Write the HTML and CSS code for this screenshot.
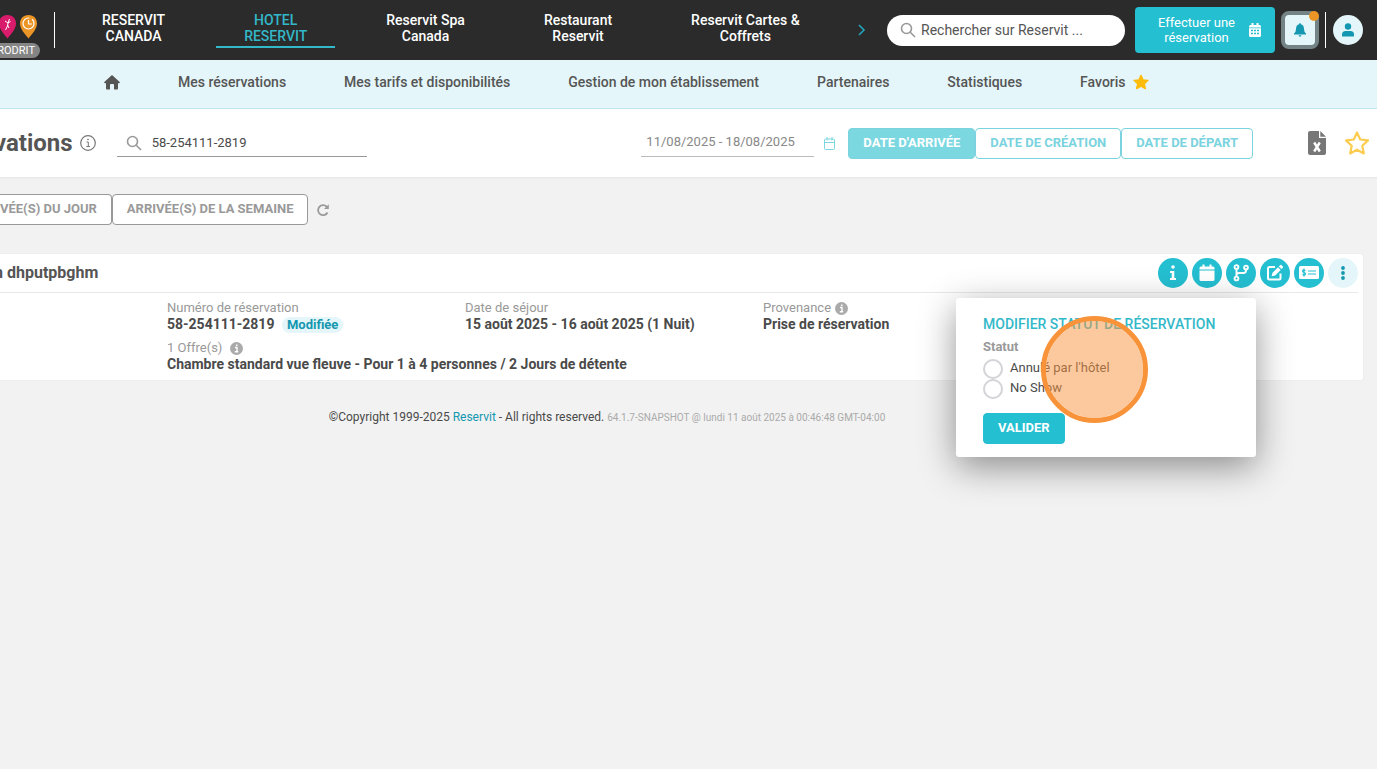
FILE: index.html
```html
<!DOCTYPE html>
<html lang="fr">
<head>
    <meta charset="UTF-8">
    <meta name="viewport" content="width=device-width, initial-scale=1.0">
    <title>Réservations</title>
    <link rel="stylesheet" href="styles.css">
</head>
<body>
    <header class="topbar">
        <div class="brand">
            <div class="pins">
                <svg width="19" height="24" viewBox="0 0 19 24">
                    <path d="M9.500 0C4 0 1 4 1 8.500 1 14 6 19 9.500 23.500 13 19 18 14 18 8.500 18 4 15 0 9.500 0z" fill="#d81b6a"/>
                    <path d="M11.500 4L10 8L9.500 11L7.500 15M9.500 10L11 13M7 6L10 8L12.500 6.500" stroke="#fff" stroke-width="1" fill="none"/>
                </svg>
                <svg width="19" height="24" viewBox="0 0 19 24">
                    <path d="M9.500 0C4 0 1 4 1 8.500 1 14 6 19 9.500 23.500 13 19 18 14 18 8.500 18 4 15 0 9.500 0z" fill="#ea9526"/>
                    <circle cx="9.500" cy="8.500" r="5.500" fill="none" stroke="#fff" stroke-width="1.200" stroke-dasharray="26 3"/>
                    <path d="M9.500 5V9H13" stroke="#fff" stroke-width="1.200" fill="none"/>
                </svg>
            </div>
            <span class="user-tag">RODRIT</span>
        </div>
        <span class="divider"></span>
        <nav class="tabs">
            <a href="#">RESERVIT<br>CANADA</a>
            <a href="#" class="active">HOTEL<br>RESERVIT</a>
            <a href="#">Reservit Spa<br>Canada</a>
            <a href="#">Restaurant<br>Reservit</a>
            <a href="#">Reservit Cartes &amp;<br>Coffrets</a>
        </nav>
        <button class="icon-btn next" aria-label="Suivant">
            <svg width="10" height="14" viewBox="0 0 10 14"><path d="M2 2L7 7L2 12" fill="none" stroke="#22a5bd" stroke-width="1.600"/></svg>
        </button>
        <label class="top-search">
            <svg width="16" height="16" viewBox="0 0 16 16" fill="none" stroke="#999" stroke-width="1.600"><circle cx="6.500" cy="6.500" r="5"/><path d="M10 10L15 15"/></svg>
            <input type="text" placeholder="Rechercher sur Reservit ..." aria-label="Rechercher">
        </label>
        <button class="book-btn">
            <span>Effectuer une<br>réservation</span>
            <svg width="12" height="14" viewBox="0 0 12 14">
                <path d="M1.500 2H2.500V0H4.500V2H7.500V0H9.500V2H10.500Q12 2 12 3.500V4.500H0V3.500Q0 2 1.500 2zM0 5.300H12V12.500Q12 14 10.500 14H1.500Q0 14 0 12.500z" fill="#fff"/>
                <path d="M2 7.500H4M5 7.500H7M8 7.500H10M2 10.500H4M5 10.500H7M8 10.500H10" stroke="#24bfd1" stroke-width="1.500"/>
            </svg>
        </button>
        <button class="bell-btn" aria-label="Notifications">
            <svg width="12" height="14" viewBox="0 0 12 14" fill="#1497b0"><path d="M5.200 1.200Q5.200 0 6 0T6.800 1.200Q10 2 10 6Q10 9 12 10.500V11.500H0V10.500Q2 9 2 6Q2 2 5.200 1.200zM4.500 12.300H7.500Q7.300 13.700 6 13.700T4.500 12.300z"/></svg>
            <span class="dot"></span>
        </button>
        <span class="divider"></span>
        <button class="avatar" aria-label="Mon compte">
            <svg width="12" height="14" viewBox="0 0 12 14" fill="#1497b0"><circle cx="6" cy="3.500" r="3.200"/><path d="M0 13.500V11.500Q0 8 3.500 8H8.500Q12 8 12 11.500V13.500z"/></svg>
        </button>
    </header>

    <nav class="menu">
        <a href="#" aria-label="Accueil">
            <svg width="16" height="15" viewBox="0 0 16 15" fill="#555"><path d="M8 0L16 7.300L15.200 8.300H14V13.500Q14 14.500 13 14.500H10V10Q10 9 9 9H7Q6 9 6 10V14.500H3Q2 14.500 2 13.500V8.300H0.800L0 7.300z"/></svg>
        </a>
        <a href="#">Mes réservations</a>
        <a href="#">Mes tarifs et disponibilités</a>
        <a href="#">Gestion de mon établissement</a>
        <a href="#">Partenaires</a>
        <a href="#">Statistiques</a>
        <a href="#">Favoris
            <svg width="16" height="16" viewBox="0 0 24 24" fill="#fdbb0b" stroke="#fdbb0b" stroke-width="2" stroke-linejoin="round"><path d="M12 2L15 8.800L22.500 9.500L17 14.500L18.600 22L12 18.200L5.400 22L7 14.500L1.500 9.500L9 8.800z"/></svg>
        </a>
    </nav>

    <section class="page-head">
        <h1>vations</h1>
        <svg class="title-info" width="16" height="16" viewBox="0 0 16 16" fill="none" stroke="#777"><circle cx="8" cy="8" r="7.300" stroke-width="1.200"/><path d="M6.500 7H8.300V11.500M6.300 11.500H10" stroke-width="1"/><circle cx="8" cy="4.500" r=".5"/></svg>
        <label class="res-search">
            <svg width="16" height="16" viewBox="0 0 16 16" fill="none" stroke="#999" stroke-width="1.600"><circle cx="6.500" cy="6.500" r="5"/><path d="M10 10L15 15"/></svg>
            <input type="text" value="58-254111-2819" aria-label="Numéro de réservation">
        </label>
        <div class="dates">
            <input type="text" value="11/08/2025 - 18/08/2025" aria-label="Période">
            <button class="icon-btn" aria-label="Calendrier">
                <svg width="11" height="13" viewBox="0 0 11 13" fill="none" stroke="#7bd6e0"><rect x=".5" y="2" width="10" height="10.500" rx="1"/><path d="M.5 5.500H10.500M3 0V3.500M8 0V3.500"/></svg>
            </button>
        </div>
        <div class="date-types">
            <button class="btn light filled">DATE D'ARRIVÉE</button>
            <button class="btn light">DATE DE CRÉATION</button>
            <button class="btn light">DATE DE DÉPART</button>
        </div>
        <div class="head-tools">
            <button class="icon-btn" aria-label="Exporter en Excel">
                <svg width="18" height="24" viewBox="0 0 18 24"><path d="M2 0H11V7H18V22Q18 24 16 24H2Q0 24 0 22V2Q0 0 2 0zM12.300 0L18 5.700H12.300z" fill="#777"/><path d="M6.200 11.500L11.800 20.500M11.800 11.500L6.200 20.500" stroke="#fff" stroke-width="2.400"/></svg>
            </button>
            <button class="icon-btn" aria-label="Ajouter aux favoris">
                <svg width="26" height="26" viewBox="0 0 26 26" fill="none" stroke="#fbcc4f" stroke-width="2.200" stroke-linejoin="round"><path d="M13 2.500L16.200 9.500L24 10.400L18.300 15.700L19.800 23.500L13 19.700L6.200 23.500L7.700 15.700L2 10.400L9.800 9.500z"/></svg>
            </button>
        </div>
    </section>

    <main>
        <div class="filters">
            <button class="btn grey cut">VÉE(S) DU JOUR</button>
            <button class="btn grey">ARRIVÉE(S) DE LA SEMAINE</button>
            <button class="icon-btn refresh" aria-label="Actualiser">
                <svg width="14" height="14" viewBox="0 0 14 14"><path d="M11.500 9.500A5 5 0 1 1 10.800 3.800" fill="none" stroke="#999" stroke-width="1.800"/><path d="M12.800 1.200V6H8z" fill="#999"/></svg>
            </button>
        </div>

        <article class="card">
            <div class="card-head">
                <h2>n dhputpbghm</h2>
                <div class="actions">
                    <button class="round" aria-label="Informations">
                        <svg width="18" height="18" viewBox="0 0 18 18" fill="#fff"><circle cx="9" cy="3" r="1.800"/><path d="M6 7H10.300V14H12V16H6V14H7.700V9H6z"/></svg>
                    </button>
                    <button class="round" aria-label="Dates">
                        <svg width="18" height="18" viewBox="0 0 18 18" fill="#fff"><path d="M3 2.500H4.500V.5H6.500V2.500H11.500V.5H13.500V2.500H15Q16.500 2.500 16.500 4V5.500H1.500V4Q1.500 2.500 3 2.500zM1.500 6.500H16.500V15.500Q16.500 17 15 17H3Q1.500 17 1.500 15.500z"/></svg>
                    </button>
                    <button class="round" aria-label="Dupliquer">
                        <svg width="18" height="18" viewBox="0 0 18 18" fill="none" stroke="#fff" stroke-width="1.900"><circle cx="4.500" cy="3" r="1.900"/><circle cx="4.500" cy="14.500" r="1.900"/><circle cx="14" cy="3.500" r="1.900"/><path d="M4.500 5V12.500M14 5.500V6.500Q14 9 11.500 9H7.500Q4.500 9 4.500 11"/></svg>
                    </button>
                    <button class="round" aria-label="Modifier">
                        <svg width="18" height="18" viewBox="0 0 18 18"><path d="M9 3H3.500Q2 3 2 4.500V14Q2 15.500 3.500 15.500H13Q14.500 15.500 14.500 14V9.500" fill="none" stroke="#fff" stroke-width="2"/><path d="M5.700 12.200L6.500 8.700L12 3.200L14.700 5.900L9.200 11.400zM12.800 2.400L14 1.200Q14.800.4 15.600 1.200L16.700 2.300Q17.500 3.100 16.700 3.900L15.500 5.100z" fill="#fff"/></svg>
                    </button>
                    <button class="round" aria-label="Paiement">
                        <svg width="20" height="16" viewBox="0 0 20 16"><rect x="0" y="1" width="20" height="13" rx="1.500" fill="#fff"/><path d="M6.500 5.500Q3.500 4.500 3.500 6T5 7.500T6.500 9Q6.500 10.500 3.500 9.600M5 3.500V11.500M9 6H17M9 9H17" fill="none" stroke="#24bfd1" stroke-width="1.200"/></svg>
                    </button>
                    <button class="round pale" aria-label="Plus d'actions">
                        <svg width="4" height="14" viewBox="0 0 4 14" fill="#1497b0"><circle cx="2" cy="2" r="1.900"/><circle cx="2" cy="7" r="1.900"/><circle cx="2" cy="12" r="1.900"/></svg>
                    </button>
                </div>
            </div>
            <div class="card-body">
                <div>
                    <p class="label">Numéro de réservation</p>
                    <p class="value">58-254111-2819 <span class="badge">Modifiée</span></p>
                </div>
                <div>
                    <p class="label">Date de séjour</p>
                    <p class="value">15 août 2025 - 16 août 2025 (1 Nuit)</p>
                </div>
                <div>
                    <p class="label">Provenance <svg width="13" height="13" viewBox="0 0 13 13"><circle cx="6.500" cy="6.500" r="6.500" fill="#aaa"/><path d="M5 5.500H7V9.500M4.800 9.800H8.300M6 3.300H7.500" stroke="#fff" stroke-width="1.400" fill="none"/></svg></p>
                    <p class="value">Prise de réservation</p>
                </div>
                <div class="offer">
                    <p class="label">1 Offre(s) <svg class="spaced" width="13" height="13" viewBox="0 0 13 13"><circle cx="6.500" cy="6.500" r="6.500" fill="#aaa"/><path d="M5 5.500H7V9.500M4.800 9.800H8.300M6 3.300H7.500" stroke="#fff" stroke-width="1.400" fill="none"/></svg></p>
                    <p class="value">Chambre standard vue fleuve - Pour 1 à 4 personnes / 2 Jours de détente</p>
                </div>
            </div>

            <form class="popup">
                <h3>MODIFIER STATUT DE RÉSERVATION</h3>
                <fieldset>
                    <legend>Statut</legend>
                    <label><input type="radio" name="statut"> Annulé par l'hôtel</label>
                    <label><input type="radio" name="statut"> No Show</label>
                </fieldset>
                <button type="button" class="btn submit">VALIDER</button>
                <span class="marker"></span>
            </form>
        </article>
    </main>

    <footer>
        ©Copyright 1999-2025 <a href="#">Reservit</a> - All rights reserved. <small>64.1.7-SNAPSHOT @ lundi 11 août 2025 à 00:46:48 GMT-04:00</small>
    </footer>
</body>
</html>
```
FILE: styles.css
```css
* {
    box-sizing: border-box;
}

body {
    margin: 0;
    background-color: #f2f2f2;
    color: #4a4a4a;
    font-family: Roboto, "Liberation Sans", sans-serif;
    font-size: 14px;
    line-height: 16px;
    min-height: 100vh;
    overflow-x: hidden;
}

h1, h2, h3, p, fieldset {
    margin: 0;
    padding: 0;
    border: none;
}

a {
    color: inherit;
    text-decoration: none;
}

button, input {
    font: inherit;
    color: inherit;
}

button {
    padding: 0;
    border: none;
    cursor: pointer;
}

input {
    min-width: 0;
    padding: 0;
    border: none;
    outline: none;
    background: none;
}

svg {
    display: block;
    flex-shrink: 0;
}

.icon-btn {
    background: none;
}

/* top bar */
.topbar {
    display: flex;
    align-items: center;
    height: 60px;
    padding-right: 14px;
    background-color: #2b2b2b;
    color: #fff;
}

.brand {
    display: flex;
    flex-direction: column;
    align-items: flex-end;
    width: 40px;
    height: 60px;
    padding-top: 15px;
    margin-right: 14px;
}

.pins {
    display: flex;
    gap: 2px;
    margin-right: 2px;
}

.user-tag {
    margin-top: 4px;
    padding-right: 5px;
    border-radius: 0 8px 8px 0;
    background-color: #858585;
    font-size: 11px;
    line-height: 15px;
}

.divider {
    width: 1px;
    height: 36px;
    background-color: #fff;
}

.tabs {
    display: flex;
    gap: 23px;
    margin-left: 19px;
    font-weight: 500;
    text-align: center;
}

.tabs a {
    padding: 0 28px 2px;
    border-bottom: 2px solid transparent;
    white-space: nowrap;
}

.tabs .active {
    color: #33b8c9;
    border-color: #33b8c9;
}

.next {
    margin: 0 20px 0 auto;
}

.top-search {
    display: flex;
    align-items: center;
    gap: 5px;
    width: 238px;
    height: 31px;
    padding: 0 13px;
    border-radius: 16px;
    background-color: #fff;
}

.top-search input {
    flex: 1;
    color: #444;
}

.top-search input::placeholder {
    color: #555;
    opacity: 1;
}

.book-btn {
    display: flex;
    align-items: center;
    justify-content: flex-end;
    gap: 14px;
    width: 140px;
    height: 46px;
    margin: 0 6px 0 10px;
    padding-right: 14px;
    border-radius: 4px;
    background-color: #24bfd1;
    color: #fff;
    font-size: 13px;
    line-height: 15px;
}

.bell-btn {
    position: relative;
    display: flex;
    align-items: center;
    justify-content: center;
    width: 38px;
    height: 38px;
    margin-right: 6px;
    border: 4px solid #748486;
    border-radius: 8px;
    background-color: #e4f6f9;
}

.dot {
    position: absolute;
    top: -4px;
    right: -4px;
    width: 10px;
    height: 10px;
    border-radius: 50%;
    background-color: #ea9526;
}

.avatar {
    display: flex;
    align-items: center;
    justify-content: center;
    width: 30px;
    height: 30px;
    margin-left: 7px;
    border-radius: 50%;
    background-color: #e4f6f9;
}

/* main menu */
.menu {
    display: flex;
    align-items: center;
    gap: 58px;
    height: 49px;
    padding: 0 104px 4px;
    border-bottom: 1px solid #bfe6ea;
    background-color: #e4f6f9;
    color: #555;
    font-weight: 500;
    white-space: nowrap;
}

.menu a {
    display: flex;
    align-items: center;
    gap: 7px;
}

/* page title and search */
.page-head {
    display: flex;
    align-items: center;
    height: 68px;
    padding-right: 7px;
    background-color: #fff;
    box-shadow: 0 1px 2px rgba(0, 0, 0, 0.06);
}

/* headings run off the left edge of the window */
h1, h2 {
    margin-left: -6px;
    color: #555;
}

h1 {
    font-size: 24px;
    line-height: 28px;
}

.title-info {
    margin-left: 7px;
}

.res-search {
    display: flex;
    align-items: center;
    gap: 10px;
    width: 250px;
    height: 27px;
    margin-left: 21px;
    padding-left: 9px;
    border-bottom: 1px solid #999;
    font-size: 13px;
}

.dates {
    display: flex;
    align-items: center;
    gap: 10px;
    margin-left: auto;
    color: #888;
    font-size: 13px;
}

.dates input {
    width: 173px;
    height: 27px;
    padding: 0 5px 3px;
    border-bottom: 1px solid #bbb;
}

.btn {
    height: 31px;
    padding: 0 14px 1px;
    border: 1px solid;
    border-radius: 4px;
    background-color: #fff;
    font-size: 13px;
    font-weight: 700;
    white-space: nowrap;
}

.date-types {
    display: flex;
    margin-left: 13px;
}

.light {
    border-color: #7ad3de;
    color: #7ad3de;
}

.light.filled {
    background-color: #7bd8e1;
    color: #fff;
}

.head-tools {
    display: flex;
    align-items: center;
    gap: 18px;
    margin-left: 55px;
}

/* quick filters */
main {
    padding: 17px 13px 0 0;
}

.filters {
    display: flex;
}

.grey {
    border-color: #999;
    color: #999;
}

.cut {
    padding-left: 0;
    border-left: none;
    border-radius: 0 4px 4px 0;
}

.refresh {
    margin-left: 8px;
}

/* reservation */
.card {
    position: relative;
    margin-top: 28px;
    padding-right: 5px;
    border: 1px solid #eee;
    border-left: none;
    border-radius: 0 4px 4px 0;
    background-color: #fff;
}

.card-head {
    display: flex;
    align-items: center;
    justify-content: space-between;
    height: 39px;
    border-bottom: 1px solid #e8e8e8;
}

h2 {
    font-size: 16px;
    line-height: 20px;
}

.actions {
    display: flex;
    gap: 4px;
}

.round {
    display: flex;
    align-items: center;
    justify-content: center;
    width: 30px;
    height: 30px;
    border-radius: 50%;
    background-color: #24bfd1;
}

.pale {
    background-color: #e4f6f9;
}

.card-body {
    display: grid;
    grid-template-columns: repeat(4, 298px);
    row-gap: 7px;
    padding: 7px 0 8px 167px;
}

.offer {
    grid-column: 1 / -1;
}

.label {
    display: flex;
    align-items: center;
    gap: 4px;
    color: #999;
    font-size: 13px;
}

.spaced {
    margin-left: 4px;
}

.value {
    font-weight: 700;
    white-space: nowrap;
}

.badge {
    margin-left: 4px;
    padding: 0 5px 1px;
    border-radius: 8px;
    background-color: #e4f6f9;
    color: #1497b0;
    font-size: 13px;
}

/* status popup */
.popup {
    position: absolute;
    top: 44px;
    right: 107px;
    width: 300px;
    padding: 18px 27px 13px;
    border-radius: 3px;
    background-color: #fff;
    box-shadow: 0 10px 36px rgba(0, 0, 0, 0.42);
}

.popup h3 {
    color: #33b8c9;
    font-size: 14px;
    font-weight: 500;
    white-space: nowrap;
}

.popup legend {
    padding: 7px 0 4px;
    color: #999;
    font-size: 13px;
    font-weight: 700;
}

.popup label {
    display: flex;
    gap: 7px;
    height: 20px;
    font-size: 13px;
    line-height: 18px;
}

.popup input {
    appearance: none;
    width: 20px;
    height: 20px;
    margin: 0;
    border: 2px solid #d3d3d8;
    border-radius: 50%;
}

.popup input:checked {
    border: 6px solid #24bfd1;
}

.submit {
    margin-top: 14px;
    border-color: #24bfd1;
    background-color: #24bfd1;
    color: #fff;
}

.marker {
    position: absolute;
    top: 18px;
    left: 85px;
    width: 107px;
    height: 107px;
    border: 5px solid #f8933a;
    border-radius: 50%;
    background-color: rgba(249, 148, 62, 0.5);
    background-clip: padding-box;
    pointer-events: none;
}

footer {
    padding: 28px 163px 20px 0;
    font-size: 12px;
    text-align: center;
}

footer a {
    color: #1497b0;
}

footer small {
    color: #aaa;
    font-size: 10px;
}
```
